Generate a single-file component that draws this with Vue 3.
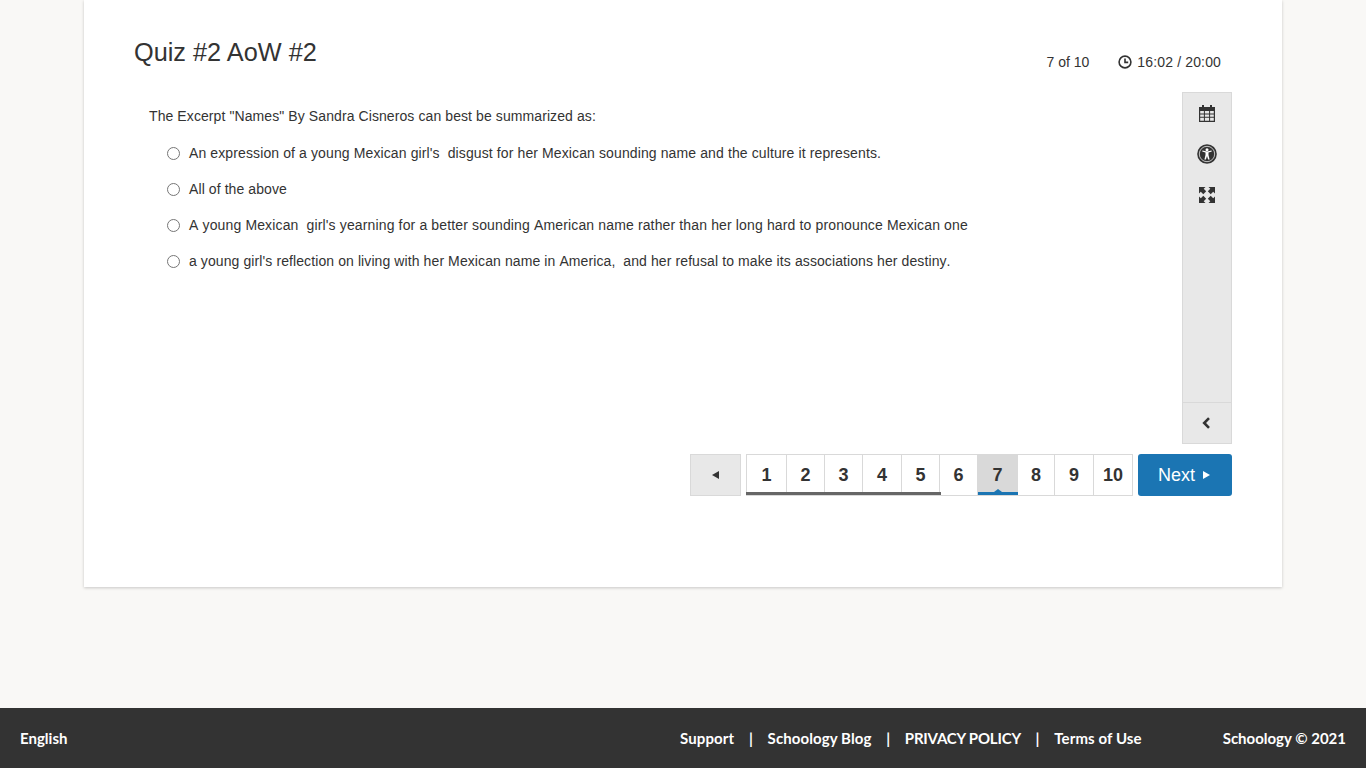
<script setup>
// ls = small per-line tracking so line widths follow the original
const options = [
  { text: "An expression of a young Mexican girl's  disgust for her Mexican sounding name and the culture it represents.", ls: 0.113 },
  { text: 'All of the above', ls: 0.09 },
  { text: "A young Mexican  girl's yearning for a better sounding American name rather than her long hard to pronounce Mexican one", ls: 0.14 },
  { text: "a young girl's reflection on living with her Mexican name in America,  and her refusal to make its associations her destiny.", ls: 0.096 }
]

// state: done = answered (dark underline), current = blue underline
const pages = [
  { n: 1, w: 40, state: 'done' },
  { n: 2, w: 38, state: 'done' },
  { n: 3, w: 38, state: 'done' },
  { n: 4, w: 39, state: 'done' },
  { n: 5, w: 38, state: 'done' },
  { n: 6, w: 38 },
  { n: 7, w: 40, state: 'current' },
  { n: 8, w: 37 },
  { n: 9, w: 39 },
  { n: 10, w: 39 }
]

const links = ['Support', 'Schoology Blog', 'PRIVACY POLICY', 'Terms of Use']
</script>

<template>
  <div class="page">
    <main class="card">
      <div class="head">
        <h1>Quiz #2 AoW #2</h1>
        <div class="meta">
          <span class="count">7 of 10</span>
          <span class="timer">
            <svg width="14" height="14" viewBox="0 0 14 14" fill="none" stroke="#333" stroke-width="1.6">
              <circle cx="7" cy="7" r="5.9" />
              <path d="M7 3.4V7.4H10.2" />
            </svg>
            <span>16:02 / 20:00</span>
          </span>
        </div>
      </div>

      <div class="body">
        <div class="question">
          <p class="prompt">The Excerpt "Names" By Sandra Cisneros can best be summarized as:</p>
          <label class="option" v-for="opt in options" :key="opt.text">
            <span class="radio"></span>
            <span class="opt-text" :style="{ letterSpacing: opt.ls + 'px' }">{{ opt.text }}</span>
          </label>
        </div>

        <aside class="tools">
          <div class="tool-list">
            <!-- calendar -->
            <svg class="tool" width="16" height="17" viewBox="0 0 16 17" fill="#333">
              <path d="M3 0h2v2h6V0h2v2h3v15H0V2h3zM1.200 6v2.400h3.700V6zm4.700 0v2.400h4.200V6zm5.200 0v2.400h3.700V6zM1.200 9.400v2.400h3.700V9.400zm4.700 0v2.400h4.200V9.400zm5.200 0v2.400h3.700V9.400zM1.200 12.800v3h3.700v-3zm4.700 0v3h4.200v-3zm5.200 0v3h3.700v-3z" fill-rule="evenodd" />
            </svg>
            <!-- accessibility -->
            <svg class="tool access" width="20" height="20" viewBox="0 0 20 20">
              <circle cx="10" cy="10" r="9.800" fill="#333" />
              <circle cx="10" cy="10" r="7.700" fill="none" stroke="#e8e8e8" stroke-width="0.800" />
              <circle cx="10" cy="5.800" r="1.500" fill="#fff" />
              <path d="M5.200 7.400L8.500 8.500V11L7.400 15.600H8.900L10 12L11.100 15.600H12.600L11.500 11V8.500L14.800 7.400L14.500 6.500L10 7.600L5.500 6.500Z" fill="#fff" />
            </svg>
            <!-- expand -->
            <svg class="tool expand" width="16" height="16" viewBox="0 0 16 16" fill="#333">
              <path d="M0 0H6.500L4.700 1.800L7.200 4.300L4.300 7.200L1.800 4.700L0 6.500Z" />
              <path d="M16 0H9.500L11.300 1.800L8.800 4.300L11.700 7.200L14.200 4.700L16 6.500Z" />
              <path d="M0 16H6.500L4.700 14.200L7.200 11.700L4.300 8.800L1.800 11.300L0 9.500Z" />
              <path d="M16 16H9.500L11.300 14.200L8.800 11.700L11.700 8.800L14.200 11.300L16 9.500Z" />
            </svg>
          </div>
          <div class="collapse">
            <svg width="9" height="12" viewBox="0 0 9 12" fill="none" stroke="#333" stroke-width="2.600">
              <path d="M7 1.200L2.200 6L7 10.800" />
            </svg>
          </div>
        </aside>
      </div>

      <nav class="pager">
        <button class="prev" type="button"><span class="tri-left"></span></button>
        <div class="pages">
          <div
            v-for="p in pages"
            :key="p.n"
            class="num"
            :class="p.state"
            :style="{ width: p.w + 'px' }"
          >{{ p.n }}</div>
        </div>
        <button class="next" type="button">Next <span class="tri-right"></span></button>
      </nav>
    </main>

    <footer class="foot">
      <span class="lang">English</span>
      <div class="links">
        <template v-for="(l, i) in links" :key="l">
          <span v-if="i" class="sep">|</span>
          <span :class="{ caps: l === 'PRIVACY POLICY' }">{{ l }}</span>
        </template>
      </div>
      <span class="copy">Schoology © 2021</span>
    </footer>
  </div>
</template>

<style>
body {
  background: #f9f8f6;
}
</style>

<style scoped>
.page {
  min-height: 768px;
  display: flex;
  flex-direction: column;
  font-family: "Liberation Sans", Arial, sans-serif;
  color: #333;
}

.card {
  box-sizing: border-box;
  width: 1198px;
  height: 587px;
  margin-left: 84px;
  padding: 0 50px;
  background: #fff;
  box-shadow: 0 1px 3px rgba(0, 0, 0, 0.2);
}

.head {
  display: flex;
  justify-content: space-between;
  align-items: flex-start;
  height: 92px;
}

h1 {
  margin: 37px 0 0;
  font-size: 25.300px;
  line-height: 30px;
  font-weight: 400;
}

.meta {
  display: flex;
  align-items: center;
  gap: 29px;
  margin: 54px 11px 0 0;
  font-size: 14px;
  line-height: 16px;
}

.count {
  font-kerning: none;
}

.timer {
  display: flex;
  align-items: center;
  gap: 5px;
  font-kerning: none;
  letter-spacing: 0.150px;
}

.body {
  display: flex;
  justify-content: space-between;
  height: 352px;
}

.question {
  padding: 16px 0 0 15px;
  font-size: 14px;
  line-height: 16px;
  font-kerning: none;
}

.prompt {
  margin: 0 0 11px;
  letter-spacing: 0.090px;
}

.option {
  display: flex;
  align-items: center;
  height: 36px;
  padding-left: 18px;
}

.radio {
  box-sizing: border-box;
  width: 13px;
  height: 13px;
  margin-right: 9px;
  border: 1px solid #767676;
  border-radius: 50%;
  background: #fff;
}

.opt-text {
  white-space: pre;
}

.tools {
  box-sizing: border-box;
  width: 50px;
  display: flex;
  flex-direction: column;
  background: #e8e8e8;
  border: 1px solid #d9d9d9;
}

.tool-list {
  flex: 1;
  display: flex;
  flex-direction: column;
  align-items: center;
  padding-top: 12px;
}

.tool {
  flex: none;
}

.access {
  margin-top: 22px;
}

.expand {
  margin-top: 23px;
}

.collapse {
  box-sizing: border-box;
  height: 41px;
  display: flex;
  align-items: center;
  justify-content: center;
  padding-right: 2px;
  border-top: 1px solid #d9d9d9;
}

.pager {
  display: flex;
  justify-content: flex-end;
  gap: 5px;
  margin-top: 10px;
  height: 42px;
}

.prev {
  box-sizing: border-box;
  width: 51px;
  padding: 0;
  display: flex;
  align-items: center;
  justify-content: center;
  background: #e8e8e8;
  border: 1px solid #d9d9d9;
}

.tri-left {
  width: 0;
  height: 0;
  border-top: 4px solid transparent;
  border-bottom: 4px solid transparent;
  border-right: 7px solid #333;
}

.pages {
  display: flex;
  box-sizing: border-box;
  border: 1px solid #d9d9d9;
  border-right: none;
  height: 42px;
}

.num {
  box-sizing: border-box;
  position: relative;
  display: flex;
  align-items: center;
  justify-content: center;
  border-right: 1px solid #d9d9d9;
  font-size: 18px;
  font-weight: 700;
  background: #fff;
}

.num.done {
  z-index: 1;
}

.num.done::after,
.num.current::after {
  content: "";
  position: absolute;
  left: -1px;
  right: -2px;
  bottom: 0;
  height: 3px;
  background: #666;
}

.num.current {
  background: #d9d9d9;
}

.num.current::after {
  left: 0;
  right: -1px;
  background: #1b75b3;
}

.num.current::before {
  content: "";
  position: absolute;
  left: 50%;
  bottom: 3px;
  margin-left: -4px;
  border-left: 4px solid transparent;
  border-right: 4px solid transparent;
  border-bottom: 3px solid #1b75b3;
}

.next {
  box-sizing: border-box;
  width: 94px;
  padding: 0 2px 0 0;
  display: flex;
  align-items: center;
  justify-content: center;
  gap: 8px;
  background: #1b75b3;
  border: none;
  border-radius: 3px;
  color: #fff;
  font-family: inherit;
  font-size: 18px;
}

.tri-right {
  width: 0;
  height: 0;
  border-top: 4px solid transparent;
  border-bottom: 4px solid transparent;
  border-left: 7px solid #fff;
}

.foot {
  box-sizing: border-box;
  height: 60px;
  margin-top: auto;
  padding: 0 20px;
  display: flex;
  align-items: center;
  background: #333;
  color: #fff;
  font-family: Lato, sans-serif;
  font-size: 15px;
  font-weight: 700;
}

.links {
  display: flex;
  gap: 14.700px;
  margin-left: auto;
  margin-right: 81px;
  letter-spacing: 0.100px;
}

.caps {
  letter-spacing: -0.210px;
}
</style>
